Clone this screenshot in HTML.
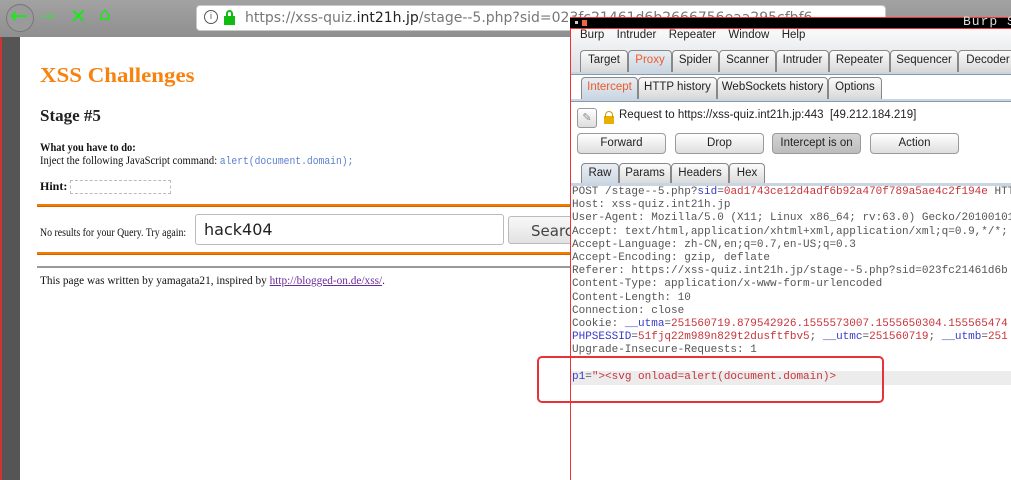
<!DOCTYPE html>
<html><head><meta charset="utf-8"><style>
*{margin:0;padding:0;box-sizing:border-box}
body{width:1011px;height:480px;overflow:hidden;position:relative;background:#fff;font-family:"Liberation Serif",serif}
.a{position:absolute;transform-origin:0 0;white-space:nowrap}
.top{left:0;top:0;width:1011px;height:37px;background:linear-gradient(#a2a2a2,#8f8f8f)}
.url{left:196px;top:5px;width:690px;height:26px;background:#fff;border-radius:4px;border:1px solid #c8c8c8;font:14px "DejaVu Sans",sans-serif;color:#777;padding:4px 0 0 48px;white-space:nowrap;overflow:hidden}
.url b{font-weight:normal;color:#222}
.side{left:0;top:37px;width:20px;height:443px;background:#555;border-left:2px solid #c33}
.m{font-family:"Liberation Mono",monospace}
.tab{position:absolute;height:22px;border:1px solid #888;border-bottom:none;border-radius:4px 4px 0 0;background:linear-gradient(#fbfbfb,#d8d8d8);font:11.5px "Liberation Sans",sans-serif;text-align:center;line-height:19px;color:#222}
.sel{background:linear-gradient(#e9eef3,#c9d6e2);color:#f05a28}
.btn{position:absolute;top:133px;height:21px;width:89px;border:1px solid #9a9a9a;border-radius:4px;background:linear-gradient(#fff,#dedede);font:11.5px "Liberation Sans",sans-serif;text-align:center;line-height:18px;color:#222}
pre{position:absolute;left:572px;top:186px;font:11px/13.2px "Liberation Mono",monospace;color:#555;white-space:pre}
.r{color:#c8343a}.b{color:#3a3ac8}
</style></head><body>
<div class="a top"></div>
<div class="a" style="left:6px;top:4px;width:28px;height:28px;border-radius:50%;border:1px solid #777;background:#9a9a9a"></div>
<div class="a" style="left:10px;top:4px;font:22px 'DejaVu Sans';color:#1e1">&#8592;</div>
<div class="a" style="left:40px;top:6px;font:18px 'DejaVu Sans';color:#5c5">&#8594;</div>
<div class="a" style="left:70px;top:4px;font:20px 'DejaVu Sans';color:#1e1">&#10005;</div>
<div class="a" style="left:99px;top:4px;font:18px 'DejaVu Sans';color:#1e1">&#8962;</div>
<div class="a url">https://xss-quiz.<b>int21h.jp</b>/stage--5.php?sid=023fc21461d6b2666756eaa295cfbf6</div>
<div class="a" style="left:204px;top:10px;width:14px;height:14px;border:1.5px solid #555;border-radius:50%;font:9px sans-serif;text-align:center;line-height:11px;color:#555">i</div>
<div class="a" style="left:224px;top:16px;width:11px;height:9px;background:#1b1"></div>
<div class="a" style="left:226px;top:10px;width:7px;height:8px;border:2px solid #1b1;border-bottom:none;border-radius:4px 4px 0 0"></div>
<div class="a side"></div>

<div class="a" style="left:40px;top:63px;font:bold 21px 'Liberation Serif';color:#f7820f;transform:scaleX(1.09)">XSS Challenges</div>
<div class="a" style="left:40px;top:106px;font:bold 17px 'Liberation Serif';color:#222">Stage #5</div>
<div class="a" style="left:40px;top:140px;font:bold 12px 'Liberation Serif';color:#111;transform:scaleX(0.87)">What you have to do:</div>
<div class="a" style="left:40px;top:153px;font:12px 'Liberation Serif';color:#111;transform:scaleX(0.88)">Inject the following JavaScript command: <span class="m" style="font-size:11px;color:#5a7fcf">alert(document.domain);</span></div>
<div class="a" style="left:40px;top:179px;font:bold 12px 'Liberation Serif';color:#111">Hint:</div>
<div class="a" style="left:70px;top:180px;width:101px;height:14px;border:1px dashed #bbb"></div>
<div class="a" style="left:37px;top:204px;width:533px;height:3px;background:#f77a00;border-bottom:1px solid #c60"></div>
<div class="a" style="left:40px;top:225px;font:12px 'Liberation Serif';color:#111;transform:scaleX(0.82)">No results for your Query. Try again:</div>
<div class="a" style="left:195px;top:214px;width:309px;height:31px;border:1px solid #bbb;border-radius:3px;font:16px 'DejaVu Sans',sans-serif;padding:5px 0 0 8px;color:#222">hack404</div>
<div class="a" style="left:508px;top:216px;width:70px;height:28px;border:1px solid #bbb;border-radius:3px;background:linear-gradient(#f8f8f8,#e2e2e2);font:15px 'DejaVu Sans',sans-serif;padding:5px 0 0 22px;color:#444">Search</div>
<div class="a" style="left:37px;top:252px;width:533px;height:3px;background:#f77a00;border-bottom:1px solid #c60"></div>
<div class="a" style="left:37px;top:266px;width:533px;height:2px;background:#999"></div>
<div class="a" style="left:40px;top:273px;font:12px 'Liberation Serif';color:#111;transform:scaleX(0.94)">This page was written by yamagata21, inspired by <span style="color:#6a2a9a;text-decoration:underline">http://blogged-on.de/xss/</span>.</div>

<!-- Burp -->
<div class="a" style="left:570px;top:17px;width:441px;height:463px;background:#fff;border-left:1px solid #e33"></div>
<div class="a" style="left:570px;top:17px;width:441px;height:12px;background:#000;border-top:1px solid #e33;border-bottom:1px solid #e33"></div>
<div class="a m" style="left:963px;top:14px;font-size:13px;color:#ddd;letter-spacing:1px">Burp Su</div>
<div class="a" style="left:575px;top:21px;width:3px;height:3px;background:#ccc"></div>
<div class="a" style="left:582px;top:20px;width:5px;height:6px;background:#e64"></div>
<div class="a" style="left:571px;top:29px;width:440px;height:46px;background:linear-gradient(#fafafa,#dadde2)"></div>
<div class="a" style="left:580px;top:29px;font:11.5px 'Liberation Sans',sans-serif;color:#222;word-spacing:3px">Burp&nbsp; Intruder&nbsp; Repeater&nbsp; Window&nbsp; Help</div>
<div class="tab" style="left:580px;top:50px;width:48px">Target</div>
<div class="tab sel" style="left:628px;top:50px;width:44px">Proxy</div>
<div class="tab" style="left:672px;top:50px;width:47px">Spider</div>
<div class="tab" style="left:719px;top:50px;width:57px">Scanner</div>
<div class="tab" style="left:776px;top:50px;width:53px">Intruder</div>
<div class="tab" style="left:829px;top:50px;width:61px">Repeater</div>
<div class="tab" style="left:890px;top:50px;width:68px">Sequencer</div>
<div class="tab" style="left:958px;top:50px;width:60px">Decoder</div>
<div class="a" style="left:571px;top:72px;width:440px;height:3px;background:#c9d6e2;border-bottom:1px solid #8899aa"></div>
<div class="tab sel" style="left:581px;top:77px;width:57px">Intercept</div>
<div class="tab" style="left:638px;top:77px;width:79px">HTTP history</div>
<div class="tab" style="left:717px;top:77px;width:111px">WebSockets history</div>
<div class="tab" style="left:828px;top:77px;width:54px">Options</div>
<div class="a" style="left:571px;top:99px;width:440px;height:3px;background:#c9d6e2;border-bottom:1px solid #8899aa"></div>
<div class="a" style="left:577px;top:108px;width:20px;height:20px;border:1px solid #999;border-radius:3px;background:linear-gradient(#fff,#ddd);font:11px sans-serif;color:#888;text-align:center;line-height:18px">&#9998;</div>
<div class="a" style="left:604px;top:116px;width:10px;height:8px;background:#e8b000"></div>
<div class="a" style="left:605px;top:111px;width:8px;height:7px;border:1.5px solid #c90;border-bottom:none;border-radius:4px 4px 0 0"></div>
<div class="a" style="left:619px;top:109px;font:11.5px 'Liberation Sans',sans-serif;color:#222">Request to https://xss-quiz.int21h.jp:443&nbsp; [49.212.184.219]</div>
<div class="btn" style="left:577px">Forward</div>
<div class="btn" style="left:675px">Drop</div>
<div class="btn" style="left:772px;background:linear-gradient(#d4d4d4,#bcbcbc)">Intercept is on</div>
<div class="btn" style="left:870px">Action</div>
<div class="tab sel" style="left:581px;top:163px;width:38px;color:#222">Raw</div>
<div class="tab" style="left:619px;top:163px;width:52px">Params</div>
<div class="tab" style="left:671px;top:163px;width:58px">Headers</div>
<div class="tab" style="left:729px;top:163px;width:36px">Hex</div>
<div class="a" style="left:571px;top:183px;width:440px;height:3px;background:#c9d6e2"></div>
<div class="a" style="left:571px;top:371px;width:440px;height:14px;background:#ececec"></div>
<pre>POST /stage--5.php?<span class="b">sid</span>=<span class="r">0ad1743ce12d4adf6b92a470f789a5ae4c2f194e</span> HTTP/1.1
Host: xss-quiz.int21h.jp
User-Agent: Mozilla/5.0 (X11; Linux x86_64; rv:63.0) Gecko/20100101
Accept: text/html,application/xhtml+xml,application/xml;q=0.9,*/*;
Accept-Language: zh-CN,en;q=0.7,en-US;q=0.3
Accept-Encoding: gzip, deflate
Referer: https://xss-quiz.int21h.jp/stage--5.php?sid=023fc21461d6b
Content-Type: application/x-www-form-urlencoded
Content-Length: 10
Connection: close
Cookie: <span class="b">__utma</span>=<span class="r">251560719.879542926.1555573007.1555650304.155565474</span>
<span class="b">PHPSESSID</span>=<span class="r">51fjq22m989n829t2dusftfbv5</span>; <span class="b">__utmc</span>=<span class="r">251560719</span>; <span class="b">__utmb</span>=<span class="r">251</span>
Upgrade-Insecure-Requests: 1

<span class="b">p1</span>=<span class="r">"&gt;&lt;svg onload=alert(document.domain)&gt;</span></pre>
<div class="a" style="left:537px;top:356px;width:347px;height:47px;border:2px solid #e8323a;border-radius:5px"></div>
</body></html>
